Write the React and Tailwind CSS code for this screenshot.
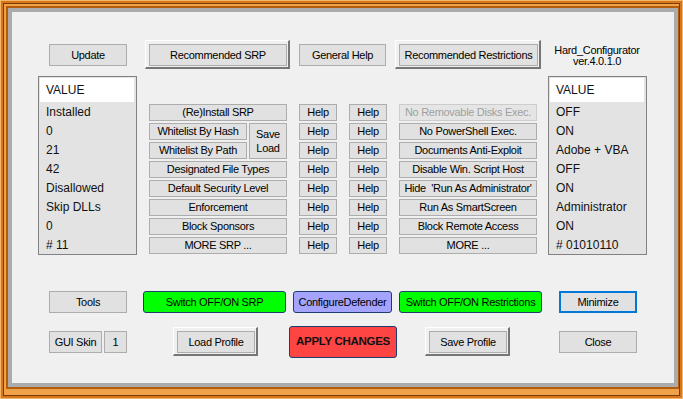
import React from 'react';

const font = "font-['Liberation_Sans',Arial,sans-serif]";
const btnText = 'text-[11px] tracking-[-0.3px] leading-none text-black whitespace-pre';
const btn = `flex items-center justify-center border border-[#adadad] bg-[#e1e1e1] ${btnText}`;

const rowStart = ['row-start-1', 'row-start-2', 'row-start-3', 'row-start-4', 'row-start-5', 'row-start-6', 'row-start-7', 'row-start-8'];

const srpRows = [
  { left: '(Re)Install SRP', right: 'No Removable Disks Exec.', off: true },
  { left: 'Whitelist By Hash', right: 'No PowerShell Exec.', split: true },
  { left: 'Whitelist By Path', right: 'Documents Anti-Exploit', split: true },
  { left: 'Designated File Types', right: 'Disable Win. Script Host' },
  { left: 'Default Security Level', right: "Hide  'Run As Administrator'" },
  { left: 'Enforcement', right: 'Run As SmartScreen' },
  { left: 'Block Sponsors', right: 'Block Remote Access' },
  { left: 'MORE SRP ...', right: 'MORE ...' },
];

const leftValues = ['Installed', '0', '21', '42', 'Disallowed', 'Skip DLLs', '0', '# 11'];
const rightValues = ['OFF', 'ON', 'Adobe + VBA', 'OFF', 'ON', 'Administrator', 'ON', '# 01010110'];

// default button: raised outer frame around the normal button
function DefaultBtn({ className, children }) {
  return (
    <div className="border-l border-t border-l-white border-t-white border-r-2 border-b-2 border-r-[#767676] border-b-[#767676] pl-[3px] pt-[3px] pr-[1px] pb-[1px]">
      <div className={`${btn} ${className}`}>{children}</div>
    </div>
  );
}

function ValueList({ items }) {
  return (
    <div className="w-[99px] h-[179px] border border-[#828282] bg-[#e3e3e3] p-[1px] text-[12px] text-[#111]">
      <div className="h-[24px] bg-white mr-[1px] flex items-center pl-[6px]">VALUE</div>
      {items.map((v, i) => (
        <div key={i} className="h-[19px] flex items-center pl-[6px]">{v}</div>
      ))}
    </div>
  );
}

function SrpGrid() {
  return (
    <div className="grid grid-cols-[98px_2px_38px_12px_38px_12px_38px_12px_138px] grid-rows-[repeat(8,17px)] gap-y-[2px] mt-[28px] ml-[12px]">
      {srpRows.map((r, i) => (
        <React.Fragment key={i}>
          {r.split ? (
            <div className={`${btn} col-start-1 ${rowStart[i]}`}>{r.left}</div>
          ) : (
            <div className={`${btn} col-start-1 col-span-3 ${rowStart[i]}`}>{r.left}</div>
          )}
          <div className={`${btn} col-start-5 ${rowStart[i]}`}>Help</div>
          <div className={`${btn} col-start-7 ${rowStart[i]}`}>Help</div>
          {r.off ? (
            <div className={`flex items-center justify-center border border-[#cccccc] bg-[#e5e5e5] text-[11px] tracking-[-0.3px] leading-none text-[#a0a0a0] col-start-9 ${rowStart[i]}`}>{r.right}</div>
          ) : (
            <div className={`${btn} col-start-9 ${rowStart[i]}`}>{r.right}</div>
          )}
        </React.Fragment>
      ))}
      <div className={`${btn} col-start-3 row-start-2 row-span-2 flex-col gap-[3px] pt-[1px]`}>
        <span>Save</span>
        <span>Load</span>
      </div>
    </div>
  );
}

export default function App() {
  return (
    <div className={`w-[683px] h-[399px] overflow-hidden ${font}`}>
      {/* orange window frame */}
      <div className="w-full h-full border border-[#f3b66a]">
        <div className="w-full h-full border-2 border-[#d8761a]">
          <div className="w-full h-full border border-[#7d3c05]">
            <div className="w-full h-full border-2 border-r-0 border-b-[6px] border-[#f0a24a]">
              <div className="w-full h-full border-2 border-r border-[#b35c0c]">
                <div className="w-full h-full border-4 border-[#ababab] bg-[#f0f0f0] flex flex-col pt-[28px]">
                  {/* top row */}
                  <div className="flex items-start h-[29px]">
                    <div className={`${btn} w-[78px] h-[22px] ml-[37px] mt-[4px]`}>Update</div>
                    <div className="ml-[18px]">
                      <DefaultBtn className="w-[138px] h-[22px]">Recommended SRP</DefaultBtn>
                    </div>
                    <div className={`${btn} w-[87px] h-[22px] ml-[9px] mt-[4px]`}>General Help</div>
                    <div className="ml-[9px]">
                      <DefaultBtn className="w-[139px] h-[22px]">Recommended Restrictions</DefaultBtn>
                    </div>
                    <div className={`w-[110px] ml-[1px] mt-[5px] text-center ${btnText} text-[11.5px] leading-[13px]`}>
                      <div>Hard_Configurator</div>
                      <div>ver.4.0.1.0</div>
                    </div>
                  </div>

                  {/* lists + SRP / restriction buttons */}
                  <div className="flex items-start mt-[7px]">
                    <div className="ml-[26px]">
                      <ValueList items={leftValues} />
                    </div>
                    <SrpGrid />
                    <div className="ml-[11px]">
                      <ValueList items={rightValues} />
                    </div>
                  </div>

                  {/* switches */}
                  <div className="flex items-start mt-[36px]">
                    <div className={`${btn} w-[78px] h-[22px] ml-[37px]`}>Tools</div>
                    <div className={`flex items-center justify-center rounded-[3px] border border-[#1c3d6e] bg-[#00ff00] ${btnText} w-[143px] h-[22px] ml-[16px]`}>Switch OFF/ON SRP</div>
                    <div className={`flex items-center justify-center rounded-[3px] border border-[#1c3d6e] bg-[#a4a4ff] ${btnText} w-[99px] h-[22px] ml-[7px]`}>ConfigureDefender</div>
                    <div className={`flex items-center justify-center rounded-[3px] border border-[#1c3d6e] bg-[#00ff00] ${btnText} w-[143px] h-[22px] ml-[7px]`}>Switch OFF/ON Restrictions</div>
                    <div className={`flex items-center justify-center border-2 border-[#0078d7] bg-[#e1e1e1] ${btnText} w-[78px] h-[22px] ml-[17px]`}>Minimize</div>
                  </div>

                  {/* profile row */}
                  <div className="flex items-start mt-[13px]">
                    <div className={`${btn} w-[53px] h-[22px] ml-[37px] mt-[5px]`}>GUI Skin</div>
                    <div className={`${btn} w-[23px] h-[22px] ml-[2px] mt-[5px]`}>1</div>
                    <div className="ml-[46px] mt-[1px]">
                      <DefaultBtn className="w-[78px] h-[22px]">Load Profile</DefaultBtn>
                    </div>
                    <div className="flex items-center justify-center rounded-[3px] border border-[#1c3d6e] bg-[#ff4444] text-[11.5px] tracking-[-0.3px] leading-none font-bold text-[#111] w-[108px] h-[32px] ml-[31px]">APPLY CHANGES</div>
                    <div className="ml-[28px] mt-[1px]">
                      <DefaultBtn className="w-[78px] h-[22px]">Save Profile</DefaultBtn>
                    </div>
                    <div className={`${btn} w-[78px] h-[22px] ml-[49px] mt-[5px]`}>Close</div>
                  </div>
                </div>
              </div>
            </div>
          </div>
        </div>
      </div>
    </div>
  );
}
